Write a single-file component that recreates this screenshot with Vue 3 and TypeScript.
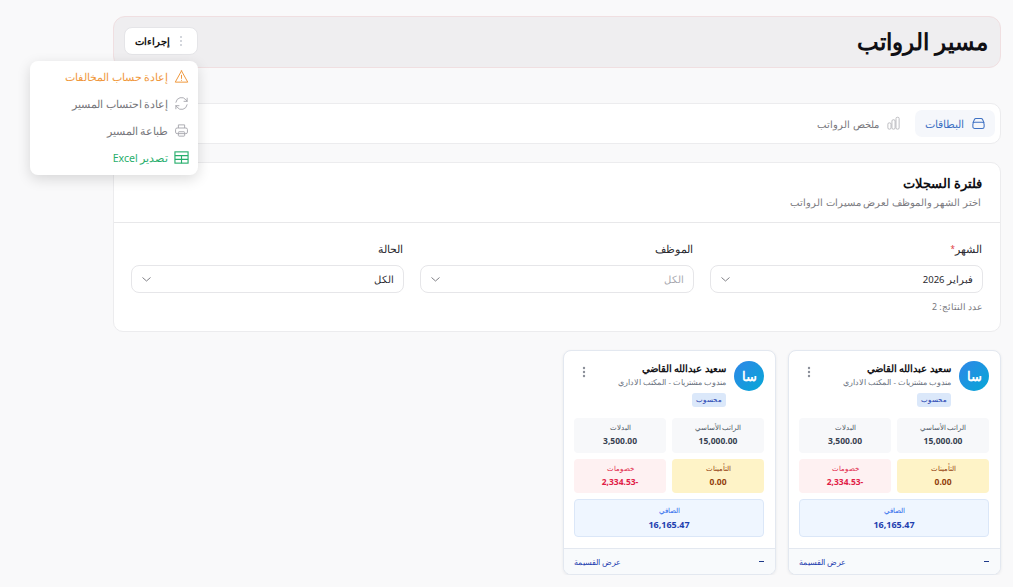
<script setup lang="ts">
interface PayrollCard {
  id: number
  name: string
  job: string
  status: string
  basic: string
  allowances: string
  insurance: string
  deductions: string
  net: string
}

const cards: PayrollCard[] = [
  { id: 1, name: 'سعيد عبدالله القاضي', job: 'مندوب مشتريات - المكتب الاداري', status: 'محسوب', basic: '15,000.00', allowances: '3,500.00', insurance: '0.00', deductions: '-2,334.53', net: '16,165.47' },
  { id: 2, name: 'سعيد عبدالله القاضي', job: 'مندوب مشتريات - المكتب الاداري', status: 'محسوب', basic: '15,000.00', allowances: '3,500.00', insurance: '0.00', deductions: '-2,334.53', net: '16,165.47' },
]
</script>

<template>
  <div class="page" dir="rtl">
    <header class="page-head">
      <h1>مسير الرواتب</h1>
      <button class="actions-btn">
        <svg class="dots" width="14" height="14" viewBox="0 0 14 14"><circle cx="7" cy="3" r="0.8" /><circle cx="7" cy="7" r="0.8" /><circle cx="7" cy="11" r="0.8" /></svg>
        <span>إجراءات</span>
      </button>
      <div class="actions-menu">
        <div class="menu-item warn">
          <svg width="15" height="15" viewBox="0 0 24 24" fill="none" stroke="currentColor" stroke-width="1.6" stroke-linejoin="round" stroke-linecap="round"><path d="M12 3 2 21h20L12 3Z" /><path d="M12 10v5M12 18v.2" /></svg>
          <span>إعادة حساب المخالفات</span>
        </div>
        <div class="menu-item">
          <svg width="15" height="15" viewBox="0 0 24 24" fill="none" stroke="currentColor" stroke-width="1.5" stroke-linecap="round" stroke-linejoin="round"><path d="M3 10a9 9 0 0 1 16-4l2 2.5M21 3.5v5h-5" /><path d="M21 14a9 9 0 0 1-16 4l-2-2.5M3 20.500v-5h5" /></svg>
          <span>إعادة احتساب المسير</span>
        </div>
        <div class="menu-item">
          <svg width="15" height="15" viewBox="0 0 24 24" fill="none" stroke="currentColor" stroke-width="1.5" stroke-linejoin="round"><path d="M7 8V3h10v5" /><rect x="2.500" y="8" width="19" height="9" rx="2.500" /><rect x="7" y="14" width="10" height="7" rx="1" /></svg>
          <span>طباعة المسير</span>
        </div>
        <div class="menu-item excel">
          <svg width="15" height="15" viewBox="0 0 24 24" fill="none" stroke="currentColor" stroke-width="1.8"><rect x="1.500" y="3" width="21" height="18" /><path d="M1.500 9h21M1.500 15h21M12 9v12" /></svg>
          <span>تصدير Excel</span>
        </div>
      </div>
    </header>

    <nav class="tabs">
      <div class="tab active">
        <svg width="15" height="15" viewBox="0 0 24 24" fill="none" stroke="currentColor" stroke-width="1.7" stroke-linejoin="round"><path d="M3 11 5.500 5.500A2.500 2.500 0 0 1 7.800 4h8.400a2.500 2.500 0 0 1 2.300 1.500L21 11" /><rect x="3" y="10" width="18" height="10" rx="3" /></svg>
        <span>البطاقات</span>
      </div>
      <div class="tab">
        <svg width="15" height="15" viewBox="0 0 24 24" fill="none" stroke="currentColor" stroke-width="1.3" stroke-linejoin="round"><rect x="3" y="11" width="5" height="10" rx="2" /><rect x="9.500" y="6" width="5" height="15" rx="2" /><rect x="16" y="2" width="5" height="19" rx="2" /></svg>
        <span>ملخص الرواتب</span>
      </div>
    </nav>

    <section class="filter-card">
      <div class="filter-head">
        <h2>فلترة السجلات</h2>
        <p>اختر الشهر والموظف لعرض مسيرات الرواتب</p>
      </div>
      <div class="filter-body">
        <div class="fields">
          <div class="field">
            <label>الشهر<i>*</i></label>
            <div class="select">
              <span>فبراير 2026</span>
              <svg width="12" height="12" viewBox="0 0 12 12" fill="none" stroke="currentColor" stroke-width="1"><path d="m1.500 4.500 4 3.500 4-3.500" /></svg>
            </div>
          </div>
          <div class="field">
            <label>الموظف</label>
            <div class="select empty">
              <span>الكل</span>
              <svg width="12" height="12" viewBox="0 0 12 12" fill="none" stroke="currentColor" stroke-width="1"><path d="m1.500 4.500 4 3.500 4-3.500" /></svg>
            </div>
          </div>
          <div class="field">
            <label>الحالة</label>
            <div class="select">
              <span>الكل</span>
              <svg width="12" height="12" viewBox="0 0 12 12" fill="none" stroke="currentColor" stroke-width="1"><path d="m1.500 4.500 4 3.500 4-3.500" /></svg>
            </div>
          </div>
        </div>
        <div class="result-count">عدد النتائج: 2</div>
      </div>
    </section>

    <section class="cards">
      <article v-for="card in cards" :key="card.id" class="pay-card">
        <div class="card-top">
          <div class="avatar">سا</div>
          <div class="who">
            <div class="name">{{ card.name }}</div>
            <div class="job">{{ card.job }}</div>
            <span class="badge">{{ card.status }}</span>
          </div>
          <svg class="more" width="12" height="14" viewBox="0 0 12 14"><circle cx="6" cy="3" r="1.200" /><circle cx="6" cy="7" r="1.200" /><circle cx="6" cy="11" r="1.200" /></svg>
        </div>
        <div class="amounts">
          <div class="amount"><span>الراتب الأساسي</span><b>{{ card.basic }}</b></div>
          <div class="amount"><span>البدلات</span><b>{{ card.allowances }}</b></div>
          <div class="amount yellow"><span>التأمينات</span><b>{{ card.insurance }}</b></div>
          <div class="amount red"><span>خصومات</span><b dir="ltr">{{ card.deductions.slice(1) }}-</b></div>
          <div class="amount net"><span>الصافي</span><b>{{ card.net }}</b></div>
        </div>
        <div class="card-foot">
          <em></em>
          <span>عرض القسيمة</span>
        </div>
      </article>
    </section>
  </div>
</template>

<style>
html { overflow: hidden; }
body { background: #f9f9fa; }
</style>

<style scoped>
.page {
  margin-left: 113px;
  margin-right: 12px;
  padding-top: 16px;
  font-family: "Noto Sans", sans-serif;
  color: #111827;
}

.page-head {
  position: relative;
  display: flex;
  justify-content: space-between;
  align-items: center;
  height: 52px;
  box-sizing: border-box;
  padding: 0 12px 0 10px;
  background: #efeef0;
  border: 1px solid #f0dfe1;
  border-radius: 12px;
}

.page-head h1 { margin: 0 0 2px; font-size: 23px; font-weight: 700; line-height: 30px; color: #0f0f14; }

.actions-btn {
  display: flex;
  align-items: center;
  gap: 4px;
  height: 28px;
  margin-bottom: 2px;
  padding: 0 9px 0 10px;
  background: #fff;
  border: 1px solid #e5e5e8;
  border-radius: 8px;
  font: 700 10px "Noto Sans", sans-serif;
  color: #111;
}

.dots { fill: #9ca3af; }

.actions-menu {
  position: absolute;
  top: 44px;
  left: -84px;
  width: 168px;
  padding: 2px 0 4px;
  background: #fff;
  border-radius: 8px;
  box-shadow: 0 4px 14px rgba(0, 0, 0, 0.14);
  z-index: 5;
}

.menu-item {
  display: flex;
  align-items: center;
  gap: 5.500px;
  height: 27px;
  padding: 0 9px 0 10px;
  font-size: 10.600px;
  color: #77777c;
}

.menu-item svg { color: #a8a8ae; flex: none; }
.menu-item.warn, .menu-item.warn svg { color: #f0993e; }
.menu-item.excel, .menu-item.excel svg { color: #27ae6c; }

.tabs {
  display: flex;
  align-items: center;
  gap: 5px;
  height: 41px;
  box-sizing: border-box;
  margin-top: 35px;
  padding: 0 5px;
  background: #fff;
  border: 1px solid #ececee;
  border-radius: 10px;
}

.tab {
  display: flex;
  align-items: center;
  gap: 7px;
  height: 27px;
  padding: 0 9px 0 10px;
  border-radius: 7px;
  font-size: 10.400px;
  color: #77777c;
}

.tab svg { color: #b0b0b5; }
.tab.active { background: #f5f7fb; color: #3f72c4; font-size: 11px; }
.tab.active svg { color: #3f72c4; }

.filter-card {
  margin-top: 18px;
  background: #fff;
  border: 1px solid #ececee;
  border-radius: 10px;
}

.filter-head {
  padding: 12px 18px 13px 18px;
  border-bottom: 1px solid #e8e8ea;
}

.filter-head h2 { margin: 0; font-size: 13px; font-weight: 700; line-height: 16px; color: #101014; }
.filter-head p { margin: 4px 1px 0 0; font-size: 10px; line-height: 14px; color: #7a7a80; }

.filter-body { padding: 19px 17px 18px; }

.fields {
  display: grid;
  grid-template-columns: repeat(3, 1fr);
  gap: 16px;
}

.field label {
  display: block;
  margin-bottom: 9px;
  padding-right: 1px;
  font-size: 10.500px;
  line-height: 14px;
  color: #2b2b30;
}

.field label i { color: #e0383e; font-style: normal; font-size: 8px; vertical-align: top; }

.select {
  display: flex;
  justify-content: space-between;
  align-items: center;
  height: 28px;
  box-sizing: border-box;
  padding: 0 9px;
  border: 1px solid #e6e6e9;
  border-radius: 8px;
  font-size: 9.500px;
  color: #2b2b30;
}

.select svg { color: #808086; }
.select.empty span { color: #a8a8ae; }

.result-count { margin-top: 8px; padding-right: 1px; font-size: 8.800px; line-height: 12px; color: #77777c; }

.cards {
  display: grid;
  grid-template-columns: repeat(4, 1fr);
  gap: 12px;
  margin-top: 18px;
}

.pay-card {
  background: #fff;
  border: 1px solid #e3e8f0;
  border-radius: 8px;
  box-shadow: 0 1px 3px rgba(30, 41, 59, 0.08);
  overflow: hidden;
}

.card-top {
  display: flex;
  align-items: flex-start;
  gap: 8px;
  padding: 10px 11px 0 10px;
}

.avatar {
  flex: none;
  width: 30px;
  height: 30px;
  border-radius: 50%;
  display: flex;
  align-items: center;
  justify-content: center;
  background: linear-gradient(135deg, #2f86e8, #06a8d6);
  color: #fff;
  font-size: 13px;
  font-weight: 700;
}

.who { flex: 1; min-width: 0; }
.name { font-size: 10.400px; font-weight: 600; color: #16161a; line-height: 14px; }
.job { margin-top: 2px; font-size: 7.800px; color: #6b7280; line-height: 11px; }

.badge {
  display: block;
  width: fit-content;
  margin-top: 5px;
  padding: 0 4px;
  line-height: 14px;
  background: #dbe8fa;
  border-radius: 3px;
  font-size: 7px;
  color: #2240b0;
}

.more { fill: #8b8f99; margin: 4px 0 0 4px; flex: none; }

.amounts {
  display: grid;
  grid-template-columns: 1fr 1fr;
  gap: 6px;
  padding: 11px 11px 11px 10px;
}

.amount {
  display: flex;
  flex-direction: column;
  align-items: center;
  justify-content: center;
  gap: 2px;
  height: 34.500px;
  background: #f7f8fa;
  border-radius: 4px;
  font-size: 6.800px;
  color: #4b5563;
}

.amount span { line-height: 10px; }
.amount b { font-size: 8.500px; line-height: 12px; font-weight: 700; color: #374151; }
.amount.yellow { background: #fef3c7; color: #92400e; }
.amount.yellow b { color: #92400e; }
.amount.red { background: #fef1f2; color: #e11d48; }
.amount.red b { color: #e11d48; }

.amount.net {
  grid-column: 1 / -1;
  height: 38px;
  gap: 3px;
  background: #eff6ff;
  border: 1px solid #dbe7f8;
  box-sizing: border-box;
  color: #2563eb;
}

.amount.net b { font-size: 9px; color: #1e40af; }

.card-foot {
  display: flex;
  justify-content: space-between;
  align-items: center;
  height: 26px;
  box-sizing: border-box;
  padding: 0 11px 0 10px;
  background: #f8fafc;
  border-top: 1px solid #e3e8f0;
  font-size: 8.300px;
  font-weight: 500;
  color: #1e40af;
}

.card-foot em { width: 5px; height: 1px; background: #1e3a8a; }
</style>
